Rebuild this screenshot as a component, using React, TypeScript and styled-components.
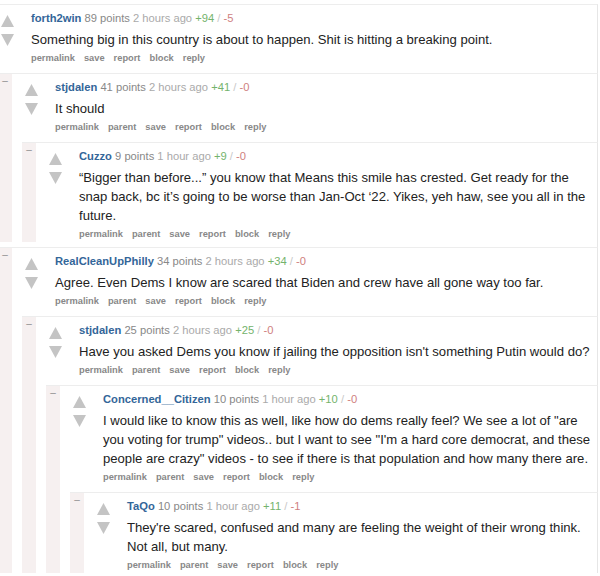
import React from "react";
import styled, { createGlobalStyle } from "styled-components";

const GlobalStyle = createGlobalStyle`
  html, body {
    margin: 0;
    padding: 0;
    background: #fff;
    overflow: hidden;
  }
  body {
    font-family: "Liberation Sans", Arial, Helvetica, sans-serif;
  }
`;

type CommentData = {
  author: string;
  points: number;
  time: string;
  ups: number;
  downs: number;
  body: string;
  hasParent?: boolean;
  replies?: CommentData[];
};

const thread: CommentData = {
  author: "forth2win",
  points: 89,
  time: "2 hours ago",
  ups: 94,
  downs: 5,
  body: "Something big in this country is about to happen. Shit is hitting a breaking point.",
  replies: [
    {
      author: "stjdalen",
      points: 41,
      time: "2 hours ago",
      ups: 41,
      downs: 0,
      hasParent: true,
      body: "It should",
      replies: [
        {
          author: "Cuzzo",
          points: 9,
          time: "1 hour ago",
          ups: 9,
          downs: 0,
          hasParent: true,
          body: "“Bigger than before...” you know that Means this smile has crested. Get ready for the snap back, bc it’s going to be worse than Jan-Oct ‘22. Yikes, yeh haw, see you all in the future.",
        },
      ],
    },
    {
      author: "RealCleanUpPhilly",
      points: 34,
      time: "2 hours ago",
      ups: 34,
      downs: 0,
      hasParent: true,
      body: "Agree. Even Dems I know are scared that Biden and crew have all gone way too far.",
      replies: [
        {
          author: "stjdalen",
          points: 25,
          time: "2 hours ago",
          ups: 25,
          downs: 0,
          hasParent: true,
          body: "Have you asked Dems you know if jailing the opposition isn't something Putin would do?",
          replies: [
            {
              author: "Concerned__Citizen",
              points: 10,
              time: "1 hour ago",
              ups: 10,
              downs: 0,
              hasParent: true,
              body: 'I would like to know this as well, like how do dems really feel? We see a lot of "are you voting for trump" videos.. but I want to see "I\'m a hard core democrat, and these people are crazy" videos - to see if there is that population and how many there are.',
              replies: [
                {
                  author: "TaQo",
                  points: 10,
                  time: "1 hour ago",
                  ups: 11,
                  downs: 1,
                  hasParent: true,
                  body: "They're scared, confused and many are feeling the weight of their wrong think. Not all, but many.",
                },
              ],
            },
          ],
        },
      ],
    },
  ],
};

// the top-level collapse strip sits just off the left edge of the crop
const Thread = styled.div`
  margin-left: -26px;
  width: 624px;
  padding-top: 4px;
`;

const Thing = styled.div`
  display: flex;
  background: #fff;
  border-top: 1px solid #ededed;
  border-right: 1px solid #e6e6e6;
`;

const Collapse = styled.div`
  width: 14px;
  flex-shrink: 0;
  background: #f6f0f0;
  color: #8f8f8f;
  font-size: 10px;
  line-height: 10px;
  text-align: center;
  padding-top: 2px;
`;

const Main = styled.div`
  flex: 1;
  min-width: 0;
  display: flex;
  flex-direction: column;
`;

const Entry = styled.div`
  display: flex;
  padding: 5px 4px 0 13px;
`;

const Votes = styled.div`
  width: 13px;
  flex-shrink: 0;
  display: flex;
  flex-direction: column;
  gap: 7px;
  padding-top: 5px;
`;

const Content = styled.div`
  flex: 1;
  min-width: 0;
  margin-left: 17px;
`;

const Tagline = styled.div`
  font-size: 11.2px;
  line-height: 16px;
  color: #888;
  white-space: nowrap;
`;

const Author = styled.span`
  color: #369;
  font-weight: bold;
`;

const Time = styled.span`
  color: #aaa;
`;

const Score = styled.span<{ $tone: "up" | "down" | "sep" }>`
  color: ${({ $tone }) =>
    $tone === "up" ? "#74b36c" : $tone === "down" ? "#cf7f7f" : "#c8c8c8"};
`;

const Body = styled.div`
  margin-top: 4px;
  font-size: 13.1px;
  line-height: 19px;
  color: #222;
`;

const Buttons = styled.ul`
  display: flex;
  gap: 9px;
  list-style: none;
  margin: 2px 0 0;
  padding: 0;
  font-size: 9.3px;
  line-height: 15px;
  font-weight: bold;
  color: #888;
`;

const Replies = styled.div`
  display: flex;
  flex-direction: column;
  gap: 5px;
  margin: 7px -1px 0 10px;
`;

const Arrow = ({ down }: { down?: boolean }) => (
  <svg width="13" height="12" viewBox="0 0 13 12">
    <polygon
      points={down ? "0,0 13,0 6.5,12" : "6.5,0 13,12 0,12"}
      fill="#c4c4c4"
    />
  </svg>
);

const Comment = ({ c }: { c: CommentData }) => {
  const actions = [
    "permalink",
    ...(c.hasParent ? ["parent"] : []),
    "save",
    "report",
    "block",
    "reply",
  ];
  return (
    <Thing>
      <Collapse>–</Collapse>
      <Main>
        <Entry>
          <Votes>
            <Arrow />
            <Arrow down />
          </Votes>
          <Content>
            <Tagline>
              <Author>{c.author}</Author> {c.points} points{" "}
              <Time>{c.time}</Time> <Score $tone="up">+{c.ups}</Score>{" "}
              <Score $tone="sep">/</Score>{" "}
              <Score $tone="down">-{c.downs}</Score>
            </Tagline>
            <Body>{c.body}</Body>
            <Buttons>
              {actions.map((a) => (
                <li key={a}>{a}</li>
              ))}
            </Buttons>
          </Content>
        </Entry>
        {c.replies && (
          <Replies>
            {c.replies.map((r, i) => (
              <Comment key={i} c={r} />
            ))}
          </Replies>
        )}
      </Main>
    </Thing>
  );
};

export default function App() {
  return (
    <>
      <GlobalStyle />
      <Thread>
        <Comment c={thread} />
      </Thread>
    </>
  );
}
